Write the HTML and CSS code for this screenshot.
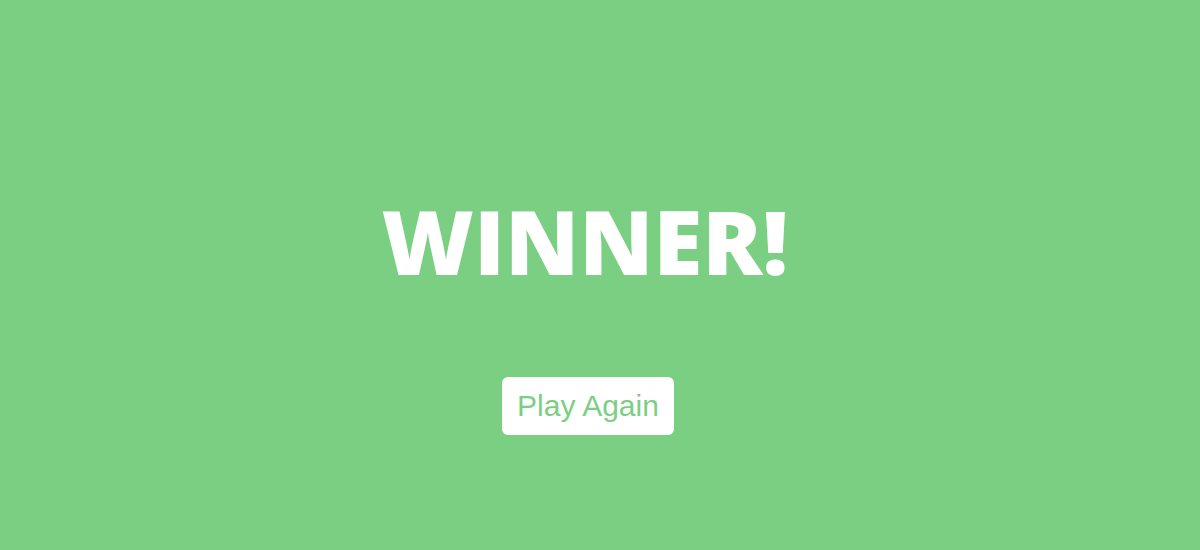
FILE: index.html
```html
<!DOCTYPE html>
<html>
<head>
<meta charset="utf-8">
<link rel="stylesheet" href="styles.css">
</head>
<body>
<main class="screen">
  <h1 class="title">WINNER!</h1>
  <button class="again">Play Again</button>
</main>
</body>
</html>
```
FILE: styles.css
```css
html, body {
  margin: 0;
  padding: 0;
  height: 100%;
}
body {
  background: #7acf83;
}
.screen {
  height: 550px;
  padding-right: 24px;
  display: flex;
  flex-direction: column;
  align-items: center;
}
.title {
  margin: 176px 0 0 0;
  font-family: "Open Sans", sans-serif;
  font-weight: 800;
  font-size: 89px;
  line-height: 130px;
  color: #ffffff;
  transform: translateX(-3px);
}
.again {
  margin-top: 71px;
  font-family: "Liberation Sans", Arial, sans-serif;
  font-size: 30px;
  line-height: 34px;
  color: #7acf83;
  background: #ffffff;
  border: none;
  border-radius: 6px;
  padding: 12px 15.5px;
}
```
